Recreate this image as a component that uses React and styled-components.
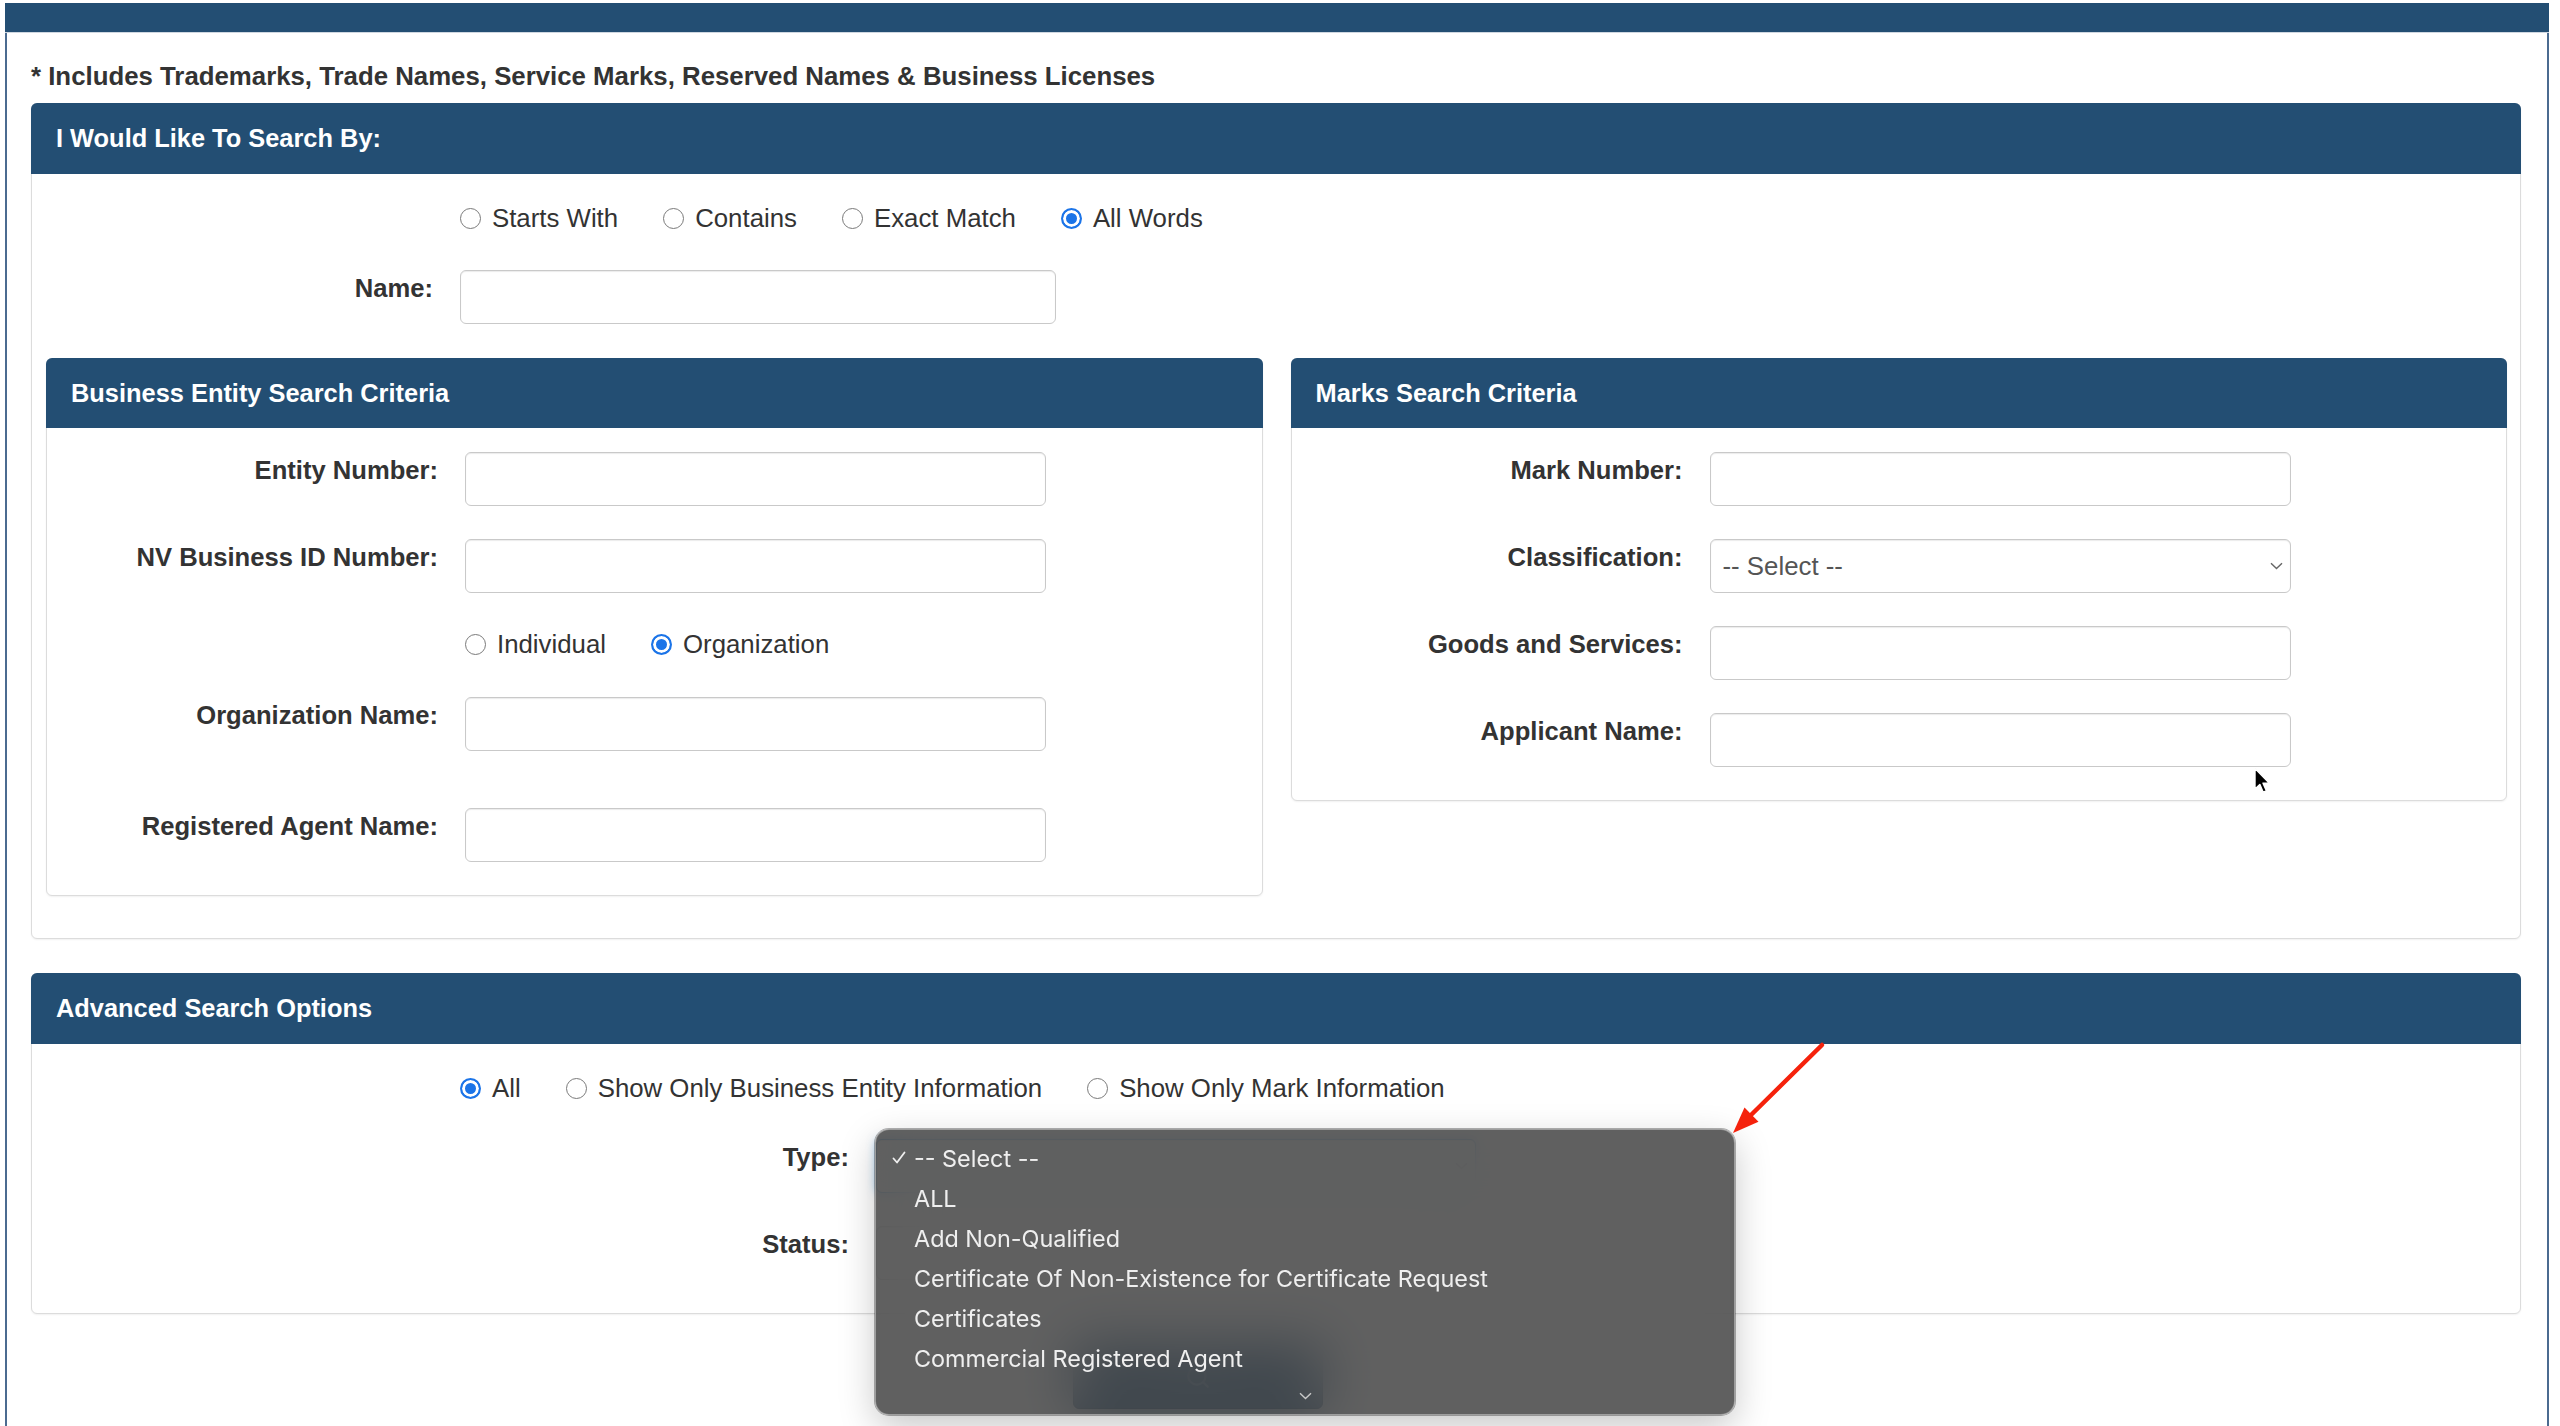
import React from 'react';
import styled, { createGlobalStyle } from 'styled-components';
import { Search } from 'lucide-react';

const GlobalStyle = createGlobalStyle`
  html, body { margin: 0; padding: 0; background: #fff; overflow: hidden; }
  body {
    font-family: "Liberation Sans", Helvetica, Arial, sans-serif;
    color: #333;
    -webkit-font-smoothing: antialiased;
  }
  * { box-sizing: border-box; }
`;

const Page = styled.div`
  position: relative;
  width: 2560px;
  height: 1426px;
  padding: 3px 11px 0 5px;
`;

const Frame = styled.div`
  height: 100%;
  border-left: 2px solid #4b6b90;
  border-right: 2px solid #4b6b90;
  display: flex;
  flex-direction: column;
`;

const TopBar = styled.div`
  height: 30px;
  margin: 0 -2px;
  background: #234e73;
  border-bottom: 1px solid #cfd7e0;
`;

const Content = styled.div`
  padding: 0 26px 0 24px;
`;

const Note = styled.p`
  margin: 26px 0 10px;
  font-size: 25.8px;
  line-height: 34px;
  font-weight: bold;
  color: #333;
`;

const Panel = styled.section`
  position: relative;
  background: #fff;
  border: 1px solid #dcdcdc;
  border-radius: 6px;
  box-shadow: 0 1px 2px rgba(0, 0, 0, 0.06);
  margin-top: ${(p) => p.$mt || 0}px;
`;

const PanelHeader = styled.div`
  height: ${(p) => p.$h}px;
  margin: -1px -1px 0;
  padding-left: 25px;
  display: flex;
  align-items: center;
  background: #234e73;
  color: #fff;
  font-size: 25.4px;
  font-weight: bold;
  border-radius: 6px 6px 0 0;
`;

const PanelBody = styled.div`
  padding: ${(p) => p.$pt ?? 26}px ${(p) => p.$pr ?? 0}px ${(p) => p.$pb ?? 0}px ${(p) => p.$pl ?? 0}px;
`;

const Columns = styled.div`
  display: grid;
  grid-template-columns: 1fr 1fr;
  gap: 28px;
  align-items: start;
`;

const FormRow = styled.div`
  display: flex;
  align-items: flex-start;
  gap: 27px;
  margin-bottom: ${(p) => p.$mb}px;
`;

const Label = styled.label`
  flex: 0 0 ${(p) => p.$w}px;
  text-align: right;
  font-size: 25.6px;
  line-height: 37px;
  font-weight: bold;
  color: #333;
`;

const TextInput = styled.input`
  width: ${(p) => p.$w}px;
  height: 54px;
  padding: 0 12px;
  border: 1px solid #c9c9c9;
  border-radius: 6px;
  background: #fff;
  box-shadow: inset 0 1px 1px rgba(0, 0, 0, 0.08);
  font: 26px "Liberation Sans", Helvetica, Arial, sans-serif;
  color: #555;
  outline: none;
`;

const SelectBox = styled.div`
  width: ${(p) => p.$w}px;
  height: 54px;
  padding: 0 7px 0 12px;
  display: flex;
  align-items: center;
  justify-content: space-between;
  border: 1px solid ${(p) => (p.$focus ? '#66afe9' : '#c9c9c9')};
  border-radius: 6px;
  background: #fff;
  box-shadow: inset 0 1px 1px rgba(0, 0, 0, 0.08)
    ${(p) => (p.$focus ? ', 0 0 10px rgba(102, 175, 233, 0.7)' : '')};
  font-size: 25.8px;
  color: #555;
`;

const RadioGroup = styled.div`
  display: flex;
  align-items: center;
  gap: 45px;
  height: 37px;
`;

const RadioOption = styled.label`
  display: flex;
  align-items: center;
  gap: 11px;
  font-size: 25.8px;
  line-height: 37px;
  color: #333;
`;

const Radio = styled.input.attrs({ type: 'radio' })`
  appearance: none;
  -webkit-appearance: none;
  margin: 0;
  width: 21px;
  height: 21px;
  border-radius: 50%;
  border: 1px solid #7a7a7a;
  background: #fff;
  flex: 0 0 auto;
  &:checked {
    border: 2px solid #1b74e8;
    background: #1b74e8;
    box-shadow: inset 0 0 0 3px #fff;
  }
`;

const ButtonRow = styled.div`
  display: flex;
  padding-left: 1042px;
  margin-top: 31px;
`;

const Button = styled.button`
  width: 250px;
  height: 64px;
  display: flex;
  align-items: center;
  justify-content: center;
  border-radius: 6px;
  border: 1px solid #1c4263;
  background: #2a5a84;
  color: #fff;
`;

const Menu = styled.div`
  position: absolute;
  left: 843px;
  top: 155px;
  width: 860px;
  height: 286px;
  padding-top: 8px;
  display: flex;
  flex-direction: column;
  border-radius: 14px;
  background: rgba(66, 66, 66, 0.84);
  backdrop-filter: blur(28px);
  border: 1px solid rgba(165, 165, 165, 0.9);
  box-shadow: 0 0 0 1px rgba(0, 0, 0, 0.3), 0 12px 36px rgba(0, 0, 0, 0.22);
  font-family: Inter, "Liberation Sans", sans-serif;
  font-size: 23.4px;
  color: #efefef;
  z-index: 5;
`;

const MenuItem = styled.div`
  height: 40px;
  display: flex;
  align-items: center;
  padding-left: 16px;
`;

const CheckSlot = styled.span`
  width: 22px;
  display: inline-flex;
  align-items: center;
`;

const ScrollArrow = styled.div`
  height: 35px;
  display: flex;
  justify-content: center;
  align-items: center;
`;

const Overlay = styled.svg`
  position: absolute;
  left: ${(p) => p.$x}px;
  top: ${(p) => p.$y}px;
  z-index: 10;
  overflow: visible;
`;

const Chevron = ({ color = '#666', w = 13 }) => (
  <svg width={w} height={8} viewBox="0 0 13 8">
    <path d="M1 1.2 L6.5 6.6 L12 1.2" fill="none" stroke={color} strokeWidth="1.4" />
  </svg>
);

const Check = () => (
  <svg width="14" height="14" viewBox="0 0 14 14">
    <path d="M1.5 7.5 L5 11.5 L12.5 1.5" fill="none" stroke="#efefef" strokeWidth="1.8" strokeLinecap="round" strokeLinejoin="round" />
  </svg>
);

const Field = ({ label, lw, w, mb = 33, select, focus, value = '-- Select --' }) => (
  <FormRow $mb={mb}>
    <Label $w={lw}>{label}</Label>
    {select ? (
      <SelectBox $w={w} $focus={focus}>
        <span>{value}</span>
        <Chevron />
      </SelectBox>
    ) : (
      <TextInput $w={w} type="text" />
    )}
  </FormRow>
);

const Radios = ({ name, options, checked, lw, mb }) => (
  <FormRow $mb={mb}>
    <Label $w={lw} />
    <RadioGroup>
      {options.map((o) => (
        <RadioOption key={o}>
          <Radio name={name} defaultChecked={o === checked} />
          {o}
        </RadioOption>
      ))}
    </RadioGroup>
  </FormRow>
);

const menuItems = [
  '-- Select --',
  'ALL',
  'Add Non-Qualified',
  'Certificate Of Non-Existence for Certificate Request',
  'Certificates',
  'Commercial Registered Agent',
];

export default function App() {
  return (
    <>
      <GlobalStyle />
      <Page>
        <Frame>
          <TopBar />
          <Content>
            <Note>* Includes Trademarks, Trade Names, Service Marks, Reserved Names &amp; Business Licenses</Note>

            <Panel>
              <PanelHeader $h={71}>I Would Like To Search By:</PanelHeader>
              <PanelBody $pl={14} $pr={13} $pb={42}>
                <Radios
                  name="searchBy"
                  lw={387}
                  mb={33}
                  options={['Starts With', 'Contains', 'Exact Match', 'All Words']}
                  checked="All Words"
                />
                <Field label="Name:" lw={387} w={596} mb={34} />

                <Columns>
                  <Panel>
                    <PanelHeader $h={70}>Business Entity Search Criteria</PanelHeader>
                    <PanelBody $pt={24}>
                      <Field label="Entity Number:" lw={391} w={581} />
                      <Field label="NV Business ID Number:" lw={391} w={581} />
                      <Radios
                        name="entityKind"
                        lw={391}
                        mb={34}
                        options={['Individual', 'Organization']}
                        checked="Organization"
                      />
                      <Field label="Organization Name:" lw={391} w={581} mb={57} />
                      <Field label="Registered Agent Name:" lw={391} w={581} mb={33} />
                    </PanelBody>
                  </Panel>

                  <Panel>
                    <PanelHeader $h={70}>Marks Search Criteria</PanelHeader>
                    <PanelBody $pt={24}>
                      <Field label="Mark Number:" lw={391} w={581} />
                      <Field label="Classification:" lw={391} w={581} select />
                      <Field label="Goods and Services:" lw={391} w={581} />
                      <Field label="Applicant Name:" lw={391} w={581} mb={33} />
                    </PanelBody>
                  </Panel>
                </Columns>
              </PanelBody>
            </Panel>

            <Panel $mt={34}>
              <PanelHeader $h={71}>Advanced Search Options</PanelHeader>
              <PanelBody $pl={14} $pr={13}>
                <Radios
                  name="show"
                  lw={387}
                  mb={32}
                  options={['All', 'Show Only Business Entity Information', 'Show Only Mark Information']}
                  checked="All"
                />
                <Field label="Type:" lw={803} w={600} select focus value="" />
                <Field label="Status:" lw={803} w={600} select value="" />
              </PanelBody>

              <Menu role="listbox">
                {menuItems.map((item, i) => (
                  <MenuItem key={item}>
                    <CheckSlot>{i === 0 && <Check />}</CheckSlot>
                    {item}
                  </MenuItem>
                ))}
                <ScrollArrow>
                  <Chevron color="#c9c9c9" w={13} />
                </ScrollArrow>
              </Menu>
            </Panel>

            <ButtonRow>
              <Button aria-label="Search">
                <Search size={26} color="#fff" />
              </Button>
            </ButtonRow>
          </Content>
        </Frame>

        <Overlay $x={1725} $y={1040} width="110" height="100" viewBox="0 0 110 100">
          <line x1="97" y1="5" x2="26" y2="75" stroke="#f5220c" strokeWidth="4.5" strokeLinecap="round" />
          <polygon points="8,93 19.5,67.6 33.5,81.8" fill="#f5220c" />
        </Overlay>

        <Overlay $x={2253} $y={767} width="18" height="28" viewBox="0 0 18 28">
          <path
            d="M2 1.5 L2 22 L6.8 17.4 L10.2 25.2 L13.4 23.8 L10 16.2 L16.4 16.2 Z"
            fill="#000"
            stroke="#fff"
            strokeWidth="1.4"
            strokeLinejoin="round"
          />
        </Overlay>
      </Page>
    </>
  );
}
